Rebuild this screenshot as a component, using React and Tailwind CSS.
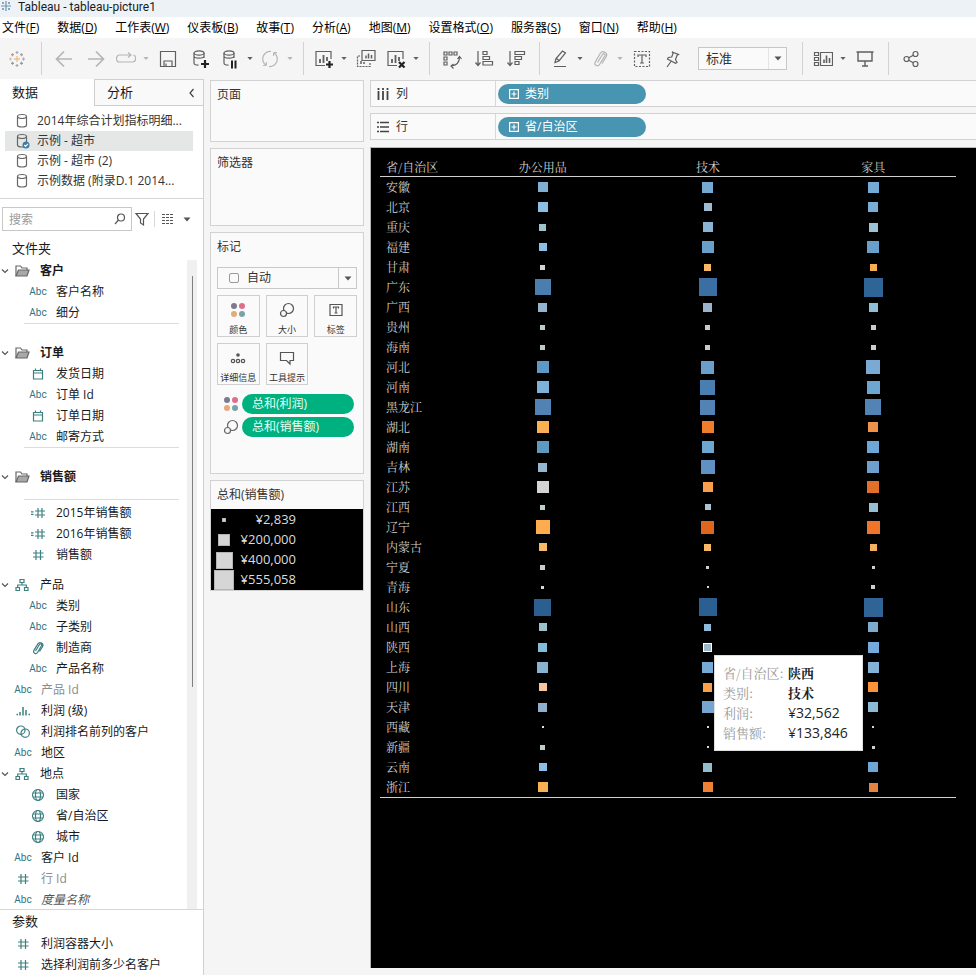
import React, { useState } from 'react';

// 1. DATA
const MENUS = [
  ['文件', 'F'], ['数据', 'D'], ['工作表', 'W'], ['仪表板', 'B'], ['故事', 'T'], ['分析', 'A'],
  ['地图', 'M'], ['设置格式', 'O'], ['服务器', 'S'], ['窗口', 'N'], ['帮助', 'H'],
];

const SOURCES = ['2014年综合计划指标明细...', '示例 - 超市', '示例 - 超市 (2)', '示例数据 (附录D.1 2014...'];

const FOLDERS = [
  { name: '客户', fields: [['abc', '客户名称'], ['abc', '细分']] },
  { name: '订单', fields: [['date', '发货日期'], ['abc', '订单 Id'], ['date', '订单日期'], ['abc', '邮寄方式']] },
];

const SALES = [['calc', '2015年销售额'], ['calc', '2016年销售额'], ['num', '销售额']];
const PRODUCT = [['abc', '类别'], ['abc', '子类别'], ['clip', '制造商'], ['abc', '产品名称']];
const LOOSE = [
  ['abc', '产品 Id', 'text-[#8c8c8c]'],
  ['bins', '利润 (级)'],
  ['set', '利润排名前列的客户'],
  ['abc', '地区'],
];
const PLACE = [['globe', '国家'], ['globe', '省/自治区'], ['globe', '城市']];
const TAIL = [['abc', '客户 Id'], ['num', '行 Id', 'text-[#8c8c8c]'], ['abc', '度量名称', 'italic text-[#555]']];

const COLUMNS = ['办公用品', '技术', '家具'];

// province, then [size, colour] for each category
const ROWS = [
  ['安徽', [10, '#7fb0d3'], [11, '#76a9d2'], [11, '#74abd6']],
  ['北京', [10, '#8bbfe6'], [8, '#9dbccf'], [10, '#76aed6']],
  ['重庆', [7, '#9bc3cb'], [10, '#8ab4d4'], [9, '#9cc3d4']],
  ['福建', [8, '#8dbde6'], [12, '#6b9fcb'], [12, '#6a9ecb']],
  ['甘肃', [5, '#d4d4d4'], [7, '#f8b864'], [7, '#f6b050']],
  ['广东', [16, '#4a7db0'], [18, '#3b6fa3'], [19, '#2f6496']],
  ['广西', [9, '#93b3cf'], [9, '#9bb4cc'], [9, '#8fbfd6']],
  ['贵州', [5, '#bccac8'], [5, '#c5cbd0'], [5, '#cccccc']],
  ['海南', [5, '#bccac8'], [5, '#c5cbd0'], [5, '#cccccc']],
  ['河北', [12, '#5e99c6'], [13, '#6b9fcb'], [14, '#7aa9d4']],
  ['河南', [12, '#7fb0d8'], [15, '#4a7db0'], [13, '#6ea6d2']],
  ['黑龙江', [16, '#5182b3'], [15, '#5283b4'], [16, '#5283b4']],
  ['湖北', [12, '#fab153'], [12, '#f07d2e'], [10, '#f0934a']],
  ['湖南', [12, '#5e99c0'], [12, '#6ea6d2'], [12, '#6ea6d6']],
  ['吉林', [9, '#94b6cf'], [14, '#5f92c2'], [12, '#6fa0cc']],
  ['江苏', [12, '#d3d5d5'], [10, '#f79f4c'], [12, '#e0702a']],
  ['江西', [5, '#bccfca'], [6, '#a9c4d4'], [9, '#97bfd2']],
  ['辽宁', [14, '#ffab4f'], [13, '#e0651f'], [13, '#f0742a']],
  ['内蒙古', [8, '#f8ba68'], [7, '#f8b864'], [7, '#f4b060']],
  ['宁夏', [5, '#c9cdcd'], [3, '#d0d0d0'], [3, '#d0d0d0']],
  ['青海', [3, '#d8d8d8'], [2, '#d8d8d8'], [4, '#c8d0d0']],
  ['山东', [17, '#2b5f92'], [18, '#2b5f92'], [19, '#306497']],
  ['山西', [8, '#9ec0c8'], [7, '#8fbbd8'], [10, '#7dabd0']],
  ['陕西', [9, '#84bcdc'], [9, '#9db7c9'], [11, '#76aadb']],
  ['上海', [11, '#88b2d0'], [11, '#76a9d6'], [11, '#84b2d4']],
  ['四川', [8, '#f8c4a0'], [9, '#fa9f4a'], [10, '#fb9338']],
  ['天津', [9, '#8eb0cc'], [12, '#76a5d2'], [10, '#8cbbd8']],
  ['西藏', [2, '#e0e0e0'], [2, '#d8d8d8'], [2, '#d8d8d8']],
  ['新疆', [5, '#c0cccc'], [2, '#d8d8d8'], [3, '#d0d0d0']],
  ['云南', [8, '#8bbde6'], [9, '#93bccc'], [10, '#6ea6d6']],
  ['浙江', [10, '#f9b055'], [10, '#ed8236'], [9, '#e28542']],
];

const LEGEND = [[4, '¥2,839'], [12, '¥200,000'], [17, '¥400,000'], [20, '¥555,058']];

// 2. ICONS
const Svg = ({ size = 20, children, className = '' }) => (
  <svg width={size} height={size} viewBox={`0 0 ${size} ${size}`} fill="none" stroke="currentColor" strokeWidth="1.2" className={`shrink-0 ${className}`} aria-hidden="true">
    {children}
  </svg>
);

const Caret = ({ className = 'text-[#555]' }) => (
  <svg width="8" height="5" viewBox="0 0 8 5" className={className} aria-hidden="true">
    <path d="M0.5 0.5h7L4 4.5z" fill="currentColor" />
  </svg>
);

const TableauLogo = () => (
  <Svg size={18}>
    <path d="M9 6v6M6 9h6" stroke="#f0c08c" strokeWidth="1.4" />
    <path d="M9 1v3M7.500 2.500h3" stroke="#a4aaba" />
    <path d="M9 14v3M7.500 15.500h3" stroke="#a4aaba" />
    <path d="M1 9h3M2.500 7.500v3" stroke="#cdc0b2" />
    <path d="M14 9h3M15.500 7.500v3" stroke="#a4aaba" />
    <path d="M4.500 3.200v3M3 4.700h3M13.500 3.200v3M12 4.700h3" stroke="#aa9fa2" />
    <path d="M4.500 11.800v3M3 13.300h3M13.500 11.800v3M12 13.300h3" stroke="#8d9bac" />
  </Svg>
);

const Database = () => (
  <>
    <ellipse cx="9" cy="4" rx="5" ry="2.200" />
    <path d="M4 4v10c0 1.300 2 2.200 4.500 2.200M14 4v5M4 7c0 1.300 2.200 2.200 5 2.200S14 8.300 14 7" />
  </>
);

const Sheet = () => (
  <>
    <path d="M17 10V2.500H2v14h9" />
    <path d="M6 14v-4M9.500 14V6M13 12V8" strokeWidth="1.800" />
  </>
);

const TOOL_ICONS = {
  back: <path d="M18 10H2.500M10 2.500L2.500 10l7.500 7.500" strokeWidth="1.700" />,
  forward: <path d="M2 10h15.500M10 2.500l7.500 7.500-7.500 7.500" strokeWidth="1.700" />,
  replay: <path d="M14 6H3.500C-.5 6-.5 13 3.500 13h13c4 0 4-6 1-7M12 3.500L15 6l-3 2.500" />,
  save: <path d="M2.500 2.500h15v15h-15zM6 17v-5h8v5M8 17v-2.500" />,
  addData: (
    <>
      <Database />
      <path d="M15 11v8M11 15h8" strokeWidth="2.200" stroke="#222" />
    </>
  ),
  pauseData: (
    <>
      <Database />
      <path d="M12 11.500v8M15.500 11.500v8" strokeWidth="2" stroke="#222" />
    </>
  ),
  refresh: <path d="M6 3.800A7.500 7.500 0 0 0 6 16.200M14 16.200A7.500 7.500 0 0 0 14 3.800M3 16.500l3.200-.2.300-3.200M17 3.500l-3.200.2-.3 3.200M6 3.800a7.500 7.500 0 0 1 5-1.300M14 16.200a7.500 7.500 0 0 1-5 1.300" />,
  newSheet: (
    <>
      <Sheet />
      <path d="M15.500 12v7M12 15.500h7" strokeWidth="2.200" stroke="#222" />
    </>
  ),
  duplicate: (
    <>
      <path d="M6 1.500h13v10H6z" />
      <path d="M4 7H1.500v10.500h12.500V13.500" strokeDasharray="2 1" />
      <path d="M10 9.500v-3M12.500 9.500v-5M15.500 9.500V6M5 15v-3M8 15v-2" strokeWidth="1.500" />
    </>
  ),
  clearSheet: (
    <>
      <Sheet />
      <path d="M13 13l5.500 5.500M18.500 13L13 18.500" strokeWidth="2.200" stroke="#222" />
    </>
  ),
  swap: <path d="M2 3h3v3H2zM7 3h3v3H7zM12 3h3v3h-3zM2 8h3v3H2zM2 13h3v3H2zM17.500 8c0 5-3 8.500-8.500 9M15.500 10l2-2.500L19.500 10M11.500 15L9 17l2.500 2.500" />,
  sortAsc: <path d="M4 2v14M1.500 13.500L4 16.500l2.500-3M9 2.500h4v3H9zM9 7.500h6.500v3H9zM9 12.500h9.500v3.500H9z" />,
  sortDesc: <path d="M4 2v14M1.500 13.500L4 16.500l2.500-3M9 2.500h9.500v3H9zM9 7.500h6.500v3H9zM9 12.500h4v3H9z" />,
  highlight: <path d="M5 13.500l1-4L12.500 2l3 2-6.500 8-4 1.500zM6.500 9.500l2.500 2M4 17.500h12" />,
  clip: <path d="M7.500 13.500l5-8c1-1.600 3.400-.3 2.400 1.400L9.500 15.500c-1.700 2.700-6 .3-4.300-2.400l5-8.600c2.300-3.700 8-.5 6 3.200L12 14.500" />,
  text: (
    <>
      <path d="M2.500 2.500h15v15h-15z" strokeDasharray="2 1.500" />
      <path d="M6 8V6h8v2M10 6v8M8 14h4" />
    </>
  ),
  pin: <path d="M10 3l6.500 2.500-1.500 1-1.500 4 1.500 3-1.500.8L5.500 10l.8-1.500 3.400-.5 1.500-4zM9 12.500L5 18" />,
  showMe: (
    <>
      <path d="M1.500 3.500h4v3h-4zM1.500 8.500h4v3h-4zM1.500 13.500h4v3h-4zM7.500 3.500h12v13h-12z" />
      <path d="M11 14v-3.500M13.500 14V6.500M16.500 14V9" strokeWidth="1.600" />
    </>
  ),
  present: <path d="M1.500 3h17M3 3v9h14V3M10 12v5M7 17h6" strokeWidth="1.400" />,
  share: (
    <>
      <circle cx="5.500" cy="10" r="2.500" />
      <circle cx="14.500" cy="5" r="2.500" />
      <circle cx="14.500" cy="15" r="2.500" />
      <path d="M7.700 8.800l4.600-2.500M7.700 11.200l4.600 2.600" />
    </>
  ),
};

const FIELD_ICONS = {
  date: <path d="M3.500 4.500h9v8.500h-9zM3.500 7h9M5.500 4.500v-2M10.500 4.500v-2" />,
  num: <path d="M6 3v10M10.500 3v10M3 6h10.500M3 10h10.500" />,
  calc: <path d="M8 3v10M12 3v10M5 6h10M5 10h10M1 6.800h2.500M1 9.300h2.500" />,
  clip: <path d="M5.500 11l4-6.500c.9-1.400 2.800-.2 2 1.200L7.500 12.500c-1.500 2.300-5 .2-3.600-2.100l4-6.500C9.800 1 14.300 3.700 12.500 6.700L9.500 11.500" />,
  bins: <path d="M1.500 11.500h1.500M5 12.500V9M8 12.500V4M11 12.500V7M13.500 11.500H15" strokeWidth="1.500" />,
  set: (
    <>
      <circle cx="5.800" cy="6.200" r="4.200" />
      <circle cx="10.200" cy="9.200" r="4.200" />
    </>
  ),
  globe: (
    <>
      <circle cx="8" cy="8" r="5.500" />
      <ellipse cx="8" cy="8" rx="2.500" ry="5.500" />
      <path d="M3 6h10M3 10h10" />
    </>
  ),
};

const FieldIcon = ({ type }) =>
  type === 'abc' ? (
    <span className="w-5 shrink-0 text-center font-[Roboto] text-[10px] text-[#2f7383]">Abc</span>
  ) : (
    <span className="flex w-5 shrink-0 justify-center text-[#3d8080]">
      <Svg size={16}>{FIELD_ICONS[type]}</Svg>
    </span>
  );

const SizeIcon = () => (
  <Svg size={16}>
    <circle cx="9.500" cy="6.500" r="5" />
    <circle cx="4.500" cy="11.500" r="3" className="fill-[#fafafa]" />
  </Svg>
);

const ColorIcon = () => (
  <Svg size={16}>
    <circle cx="4" cy="4" r="3" fill="#7d7a8c" stroke="none" />
    <circle cx="12" cy="4" r="3" fill="#de6e8c" stroke="none" />
    <circle cx="4" cy="12" r="3" fill="#e3ab7b" stroke="none" />
    <circle cx="12" cy="12" r="3" fill="#7ba3a6" stroke="none" />
  </Svg>
);

const MARK_BUTTONS = [
  ['颜色', <ColorIcon />],
  ['大小', <SizeIcon />],
  ['标签', <Svg size={16}><path d="M2 2.500h12v11H2zM5.500 6.500V5h5v1.500M8 5v6M6.500 11h3" /></Svg>],
  ['详细信息', <Svg size={16}><circle cx="8" cy="5" r="1.800" fill="currentColor" stroke="none" /><circle cx="3" cy="11" r="1.700" /><circle cx="8" cy="11" r="1.700" /><circle cx="13" cy="11" r="1.700" /></Svg>],
  ['工具提示', <Svg size={16}><path d="M1.500 2.500h13v8H11V14l-3.500-3.500h-6z" /></Svg>],
];

// 3. SIDEBAR PARTS
const Field = ({ field, nested }) => (
  <li className={`flex h-[21px] items-center ${nested ? 'gap-2 pl-7' : 'gap-2 pl-[13px]'}`}>
    <FieldIcon type={field[0]} />
    <span className={field[2] || ''}>{field[1]}</span>
  </li>
);

const Chevron = () => (
  <Svg size={10} className="text-[#555]">
    <path d="M2 3.500L5 6.500l3-3" />
  </Svg>
);

const Group = ({ name, folder }) => (
  <li className="flex h-[21px] items-center">
    <button className="flex items-center">
      <Chevron />
      <span className={`ml-1 mr-2.5 ${folder ? 'text-[#666]' : 'text-[#3d8080]'}`}>
        <Svg size={16}>
          {folder ? (
            <>
              <path d="M2 13V3h4.500l1.500 2h5v2" />
              <path d="M4.500 7H15l-2 6H2z" fill="#a8a8a8" />
            </>
          ) : (
            <path d="M6 2.500h4v3H6zM2 10.500h3.500v3H2zM10.500 10.500H14v3h-3.500zM8 5.500V8M3.700 10.500V8h8.600v2.500" />
          )}
        </Svg>
      </span>
      <span className={folder ? 'font-bold' : ''}>{name}</span>
    </button>
  </li>
);

const Divider = () => <li className="ml-6 h-px w-[155px] bg-[#dcdcdc]" />;

const Sidebar = () => {
  const [tab, setTab] = useState('数据');

  return (
    <aside className="flex w-[204px] shrink-0 flex-col border-r border-[#d0d0d0] bg-white">
      <div className="flex h-[27px] text-[13px]" role="tablist">
        {['数据', '分析'].map((name) => (
          <button
            key={name}
            role="tab"
            aria-selected={tab === name}
            onClick={() => setTab(name)}
            className={`flex items-center justify-between pl-3 pr-1.5 ${
              tab === name ? 'w-[94px]' : 'flex-1 border-b border-l border-t border-[#cfcfcf] bg-[#f9f9f9]'
            }`}
          >
            {name}
            {name === '分析' && (
              <Svg size={10} className="text-[#444]">
                <path d="M6.500 1L3 5l3.500 4" />
              </Svg>
            )}
          </button>
        ))}
      </div>

      <ul className="mt-[5px] border-b border-[#d6d6d6] pb-[7px] text-[#333]">
        {SOURCES.map((name, i) => (
          <li key={name} className={`ml-[5px] mr-2.5 flex h-5 items-center gap-[7px] pl-[9px] ${i === 1 ? 'bg-[#e5e7e7]' : ''}`}>
            <Svg size={16} className="text-[#666]">
              <ellipse cx="8" cy="3.500" rx="4.500" ry="2" />
              <path d="M3.500 3.500v8.500c0 1.200 2 2 4.500 2s4.500-.8 4.500-2V3.500" />
              {i === 1 && <circle cx="12" cy="12" r="3.500" fill="#3b7ba5" stroke="none" />}
              {i === 1 && <path d="M10.300 12l1.300 1.300 2.300-2.500" stroke="#fff" />}
            </Svg>
            <span className="whitespace-nowrap">{name}</span>
          </li>
        ))}
      </ul>

      <div className="mt-2 flex items-center pl-0.5">
        <div className="relative">
          <input aria-label="搜索" placeholder="搜索" className="h-6 w-[130px] border border-[#c8c8c8] pl-1.5 pr-6 placeholder:text-[#9a9a9a]" />
          <Svg size={12} className="absolute right-1.5 top-1.5 text-[#555]">
            <circle cx="7" cy="4.500" r="3.500" />
            <path d="M4.500 7L1 11" />
          </Svg>
        </div>
        <button aria-label="筛选" className="ml-0.5 text-[#555]">
          <Svg size={16}>
            <path d="M2 2.500h12L9.500 8v6L6.500 12V8z" />
          </Svg>
        </button>
        <span className="mx-1 h-4 w-px bg-[#d8d8d8]" />
        <button aria-label="视图" className="ml-0.5 flex items-center gap-2 text-[#555]">
          <Svg size={14}>
            <path d="M1 2.500h12M1 5.500h12M1 8.500h12M1 11.500h12" strokeDasharray="3 1" />
          </Svg>
          <Caret />
        </button>
      </div>

      <h2 className="mt-1.5 pl-3 text-[13px] leading-[23px]">文件夹</h2>

      <div className="flex flex-1">
        <ul className="-mb-0.5 flex-1">
          {FOLDERS.map((folder) => (
            <React.Fragment key={folder.name}>
              <Group name={folder.name} folder />
              {folder.fields.map((f) => <Field key={f[1]} field={f} nested />)}
              <Divider />
              <li className="h-[18px]" />
            </React.Fragment>
          ))}
          <Group name="销售额" folder />
          <li className="h-3" />
          <Divider />
          <li className="h-0.5" />
          {SALES.map((f) => <Field key={f[1]} field={f} nested />)}
          <li className="h-[9px]" />
          <Group name="产品" />
          {PRODUCT.map((f) => <Field key={f[1]} field={f} nested />)}
          {LOOSE.map((f) => <Field key={f[1]} field={f} />)}
          <Group name="地点" />
          {PLACE.map((f) => <Field key={f[1]} field={f} nested />)}
          {TAIL.map((f) => <Field key={f[1]} field={f} />)}
        </ul>
        <div className="mr-1.5 flex w-2.5 justify-center bg-[#f0f0f0] pt-4">
          <div className="h-[65%] w-px bg-[#808080]" />
        </div>
      </div>

      <section className="border-t border-[#d6d6d6]">
        <h2 className="pl-3 text-[13px] leading-[23px]">参数</h2>
        <ul>
          <Field field={['num', '利润容器大小']} />
          <Field field={['num', '选择利润前多少名客户']} />
        </ul>
      </section>
    </aside>
  );
};

// 4. TOOLBAR
const Tool = ({ icon, label, menu, dim, narrow }) => (
  <div className={`flex items-center ${dim ? 'text-[#b5b5b5]' : 'text-[#5f5f5f]'}`}>
    <button aria-label={label} className={`flex justify-center ${menu || narrow ? 'w-7' : 'w-8'}`}>
      <Svg>{TOOL_ICONS[icon]}</Svg>
    </button>
    {menu && (
      <button aria-label={`${label}选项`} className="flex w-3 justify-center">
        <Caret className="w-1.5" />
      </button>
    )}
  </div>
);

const Separator = () => (
  <span className="flex w-3.5 shrink-0 justify-center self-stretch py-1">
    <span className="w-px bg-[#d2d2d2]" />
  </span>
);

const Toolbar = () => (
  <div className="flex h-[41px] items-center bg-[#f5f5f5]">
    <button aria-label="开始页面" className="flex w-[34px] justify-center">
      <TableauLogo />
    </button>
    <Separator />
    <Tool icon="back" label="撤消" dim />
    <Tool icon="forward" label="重做" dim />
    <Tool icon="replay" label="重播" dim menu />
    <Tool icon="save" label="保存" />
    <Tool icon="addData" label="新建数据源" />
    <Tool icon="pauseData" label="暂停自动更新" menu />
    <Tool icon="refresh" label="运行更新" dim menu />
    <Separator />
    <Tool icon="newSheet" label="新建工作表" menu />
    <Tool icon="duplicate" label="复制" />
    <Tool icon="clearSheet" label="清除工作表" menu />
    <Separator />
    <Tool icon="swap" label="交换行和列" />
    <Tool icon="sortAsc" label="升序排序" />
    <Tool icon="sortDesc" label="降序排序" />
    <Separator />
    <Tool icon="highlight" label="突出显示" menu />
    <Tool icon="clip" label="组成员" dim menu />
    <Tool icon="text" label="显示标记标签" />
    <Tool icon="pin" label="固定轴" narrow />
    <div className="relative ml-3 mr-2">
      <select aria-label="适合" className="h-[23px] w-[89px] appearance-none border border-[#c8c8c8] bg-[#fafafa] pl-[7px] text-[13px] text-[#333]">
        <option>标准</option>
        <option>整个视图</option>
      </select>
      <span className="pointer-events-none absolute right-px top-px flex h-[21px] w-[18px] items-center justify-center border-l border-[#e4e4e4]">
        <Caret className="w-2 text-[#555]" />
      </span>
    </div>
    <Separator />
    <Tool icon="showMe" label="智能推荐" menu />
    <Tool icon="present" label="演示模式" />
    <Separator />
    <Tool icon="share" label="共享" />
  </div>
);

// 5. CARDS
const Card = ({ title, className = '', children }) => (
  <section className={`border border-[#d2d2d2] bg-[#fafafa] ${className}`}>
    <h2 className="pl-1.5 leading-7 text-[#333]">{title}</h2>
    {children}
  </section>
);

const MarksCard = () => (
  <Card title="标记" className="min-h-[242px]">
    <div className="px-1.5 pt-1.5">
      <div className="relative">
        <select aria-label="标记类型" className="h-[22px] w-full appearance-none border border-[#c8c8c8] bg-[#fafafa] pl-[29px] text-[#333]">
          <option>自动</option>
          <option>方形</option>
        </select>
        <span className="pointer-events-none absolute left-3 top-1.5 size-2.5 rounded-xs border border-[#999]" />
        <span className="pointer-events-none absolute right-px top-px flex h-5 w-[18px] items-center justify-center border-l border-[#c8c8c8]">
          <Caret />
        </span>
      </div>

      <div className="mt-1.5 grid grid-cols-3 gap-1.5">
        {MARK_BUTTONS.map(([label, icon]) => (
          <button key={label} className="flex h-[42px] flex-col items-center justify-between border border-[#cfcfcf] pt-1.5 text-[9px] leading-3 text-[#333]">
            <span className="text-[#555]">{icon}</span>
            <span className="whitespace-nowrap">{label}</span>
          </button>
        ))}
      </div>

      <ul className="mt-[9px] space-y-[3px]">
        {[['总和(利润)', <ColorIcon />], ['总和(销售额)', <SizeIcon />]].map(([name, icon]) => (
          <li key={name} className="flex items-center gap-[3px] pl-1.5 pr-[3px] text-[#666]">
            {icon}
            <button className="h-5 flex-1 rounded-full bg-[#00b180] pl-2.5 text-left leading-5 text-[#e6fff6]">{name}</button>
          </li>
        ))}
      </ul>
    </div>
  </Card>
);

const SizeLegend = () => (
  <Card title="总和(销售额)">
    <ul className="bg-black pt-px text-[13px] text-[#dcdcdc]">
      {LEGEND.map(([size, label]) => (
        <li key={label} className="flex h-5 items-center">
          <span className="ml-[3px] flex w-5 justify-center">
            <span className="border border-[#b4b4b4] bg-[#d6d6d6]" style={{ width: size, height: size }} />
          </span>
          <span className="w-[62px] text-right">{label}</span>
        </li>
      ))}
    </ul>
  </Card>
);

// 6. SHELVES + VIEW
const Shelf = ({ name, pill, icon }) => (
  <div className="flex h-[27px] items-center border border-r-0 border-[#d2d2d2] bg-[#fafafa] text-[#333]">
    <div className="flex w-[125px] items-center gap-1.5 self-stretch border-r border-[#d8d8d8] pl-[5px]">
      <Svg size={14} className="text-[#444]">{icon}</Svg>
      <span>{name}</span>
    </div>
    <button className="ml-0.5 flex h-5 w-[148px] items-center gap-1.5 rounded-full bg-[#4795b0] pl-[11px] text-white">
      <Svg size={10}>
        <path d="M.6.6h8.800v8.800H.6zM5 2.500v5M2.500 5h5" />
      </Svg>
      {pill}
    </button>
  </div>
);

const TIP_ROWS = [
  ['省/自治区:', '陕西', 'font-bold text-[13px]'],
  ['类别:', '技术', 'font-bold text-[13px]'],
  ['利润:', '¥32,562', "font-['Open_Sans',sans-serif] text-sm/5"],
  ['销售额:', '¥133,846', "font-['Open_Sans',sans-serif] text-sm/5"],
];

const Tooltip = () => (
  <dl className="absolute left-1/2 top-[18px] z-10 ml-1.5 grid w-[149px] grid-cols-[65px_auto] border border-[#ddd] bg-white py-[7px] pl-2 text-left leading-5 text-[#222]">
    {TIP_ROWS.map(([label, value, style]) => (
      <React.Fragment key={label}>
        <dt className="whitespace-nowrap text-[13px] leading-5 text-[#999]">{label}</dt>
        <dd className={`h-5 ${style}`}>{value}</dd>
      </React.Fragment>
    ))}
  </dl>
);

const View = () => (
  <div className="my-[7px] flex-1 border-l border-t border-[#b8b8b8] bg-black pl-[9px] pr-5 pt-[9px] font-['Noto_Serif_CJK_SC','Noto_Sans_CJK_SC',serif] text-[#d0d0d0]">
    <table className="w-full table-fixed border-separate border-spacing-0 border-b border-[#d0d0d0]">
      <thead>
        <tr>
          <th className="h-5 w-20 border-b border-[#d0d0d0] p-0 pl-1.5 text-left font-normal">省/自治区</th>
          {COLUMNS.map((c) => (
            <th key={c} className="h-5 border-b border-[#d0d0d0] p-0 font-normal">{c}</th>
          ))}
        </tr>
      </thead>
      <tbody>
        {ROWS.map(([name, ...marks]) => (
          <tr key={name}>
            <th className="h-5 p-0 pl-1.5 text-left font-normal leading-5">{name}</th>
            {marks.map(([size, color], i) => {
              const selected = name === '陕西' && i === 1;
              return (
                <td key={i} className="relative h-5 p-0">
                  <div className="flex h-5 items-center justify-center">
                    <span className={selected ? 'border border-white' : ''} style={{ width: size, height: size, backgroundColor: color }} />
                  </div>
                  {selected && <Tooltip />}
                </td>
              );
            })}
          </tr>
        ))}
      </tbody>
    </table>
  </div>
);

const App = () => (
  <div className="flex min-h-screen flex-col bg-[#f5f5f5] font-['Open_Sans','Noto_Sans_CJK_SC',sans-serif] text-xs text-[#1a1a1a]">
    <header className="flex h-[17px] items-start bg-[#edf2f7]">
      <span className="w-[18px]">
        <Svg size={12} className="text-[#6f93ad]">
          <path d="M6 1v10M1 6h10M3 2v2M2 3h2M9 2v2M8 3h2M3 8v2M2 9h2M9 8v2M8 9h2" />
        </Svg>
      </span>
      <h1 className="font-[Roboto] leading-[14px]">Tableau - tableau-picture1</h1>
    </header>

    <nav className="flex h-[21px] items-center gap-[18px] bg-white pl-0.5 text-black">
      {MENUS.map(([name, key]) => (
        <button key={key} className="whitespace-nowrap">
          {name}(<u>{key}</u>)
        </button>
      ))}
    </nav>

    <Toolbar />

    <div className="flex flex-1">
      <Sidebar />

      <div className="ml-1.5 flex w-[154px] shrink-0 flex-col gap-1.5 pt-px">
        <Card title="页面" className="min-h-[62px]" />
        <Card title="筛选器" className="min-h-[78px]" />
        <MarksCard />
        <SizeLegend />
      </div>

      <main className="ml-1.5 flex min-w-0 flex-1 flex-col pt-px">
        <Shelf name="列" pill="类别" icon={<path d="M2.500 4v9M7 4v9M11.500 4v9M2.500 1v2M7 1v2M11.500 1v2" strokeWidth="1.800" />} />
        <div className="h-1.5" />
        <Shelf name="行" pill="省/自治区" icon={<path d="M4 2.500h9M4 7h9M4 11.500h9M1 2.500h2M1 7h2M1 11.500h2" strokeWidth="1.600" />} />
        <View />
      </main>
    </div>
  </div>
);

export default App;
